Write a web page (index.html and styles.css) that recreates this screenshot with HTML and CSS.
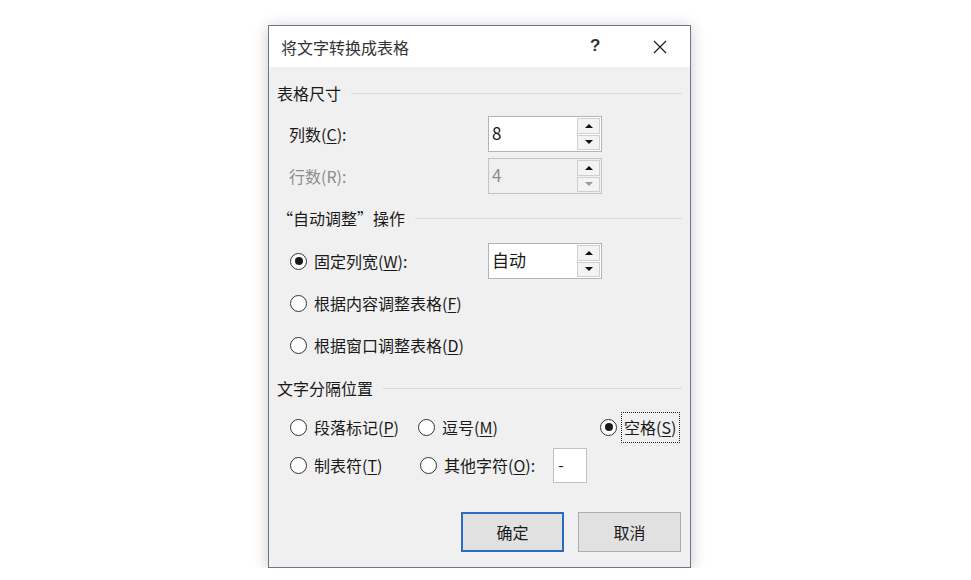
FILE: index.html
```html
<!DOCTYPE html>
<html lang="zh-CN">
<head>
    <meta charset="UTF-8">
    <title>将文字转换成表格</title>
    <link rel="stylesheet" href="styles.css">
</head>
<body>

<div class="dialog">
    <div class="titlebar">
        <span class="title">将文字转换成表格</span>
        <span class="help">?</span>
        <span class="close">
            <svg width="16" height="16" viewBox="0 0 16 16"><path d="M2 2 L14 14 M14 2 L2 14" stroke="#222" stroke-width="1.3" fill="none"/></svg>
        </span>
    </div>

    <div class="content">
        <div class="group-head head-size"><span>表格尺寸</span></div>

        <div class="row row-cols">
            <label class="label">列数(<u>C</u>):</label>
            <div class="spin">
                <span class="spin-value">8</span>
                <div class="spin-btns"><span class="btn-up"></span><span class="btn-down"></span></div>
            </div>
        </div>

        <div class="row row-rows disabled">
            <label class="label">行数(R):</label>
            <div class="spin">
                <span class="spin-value">4</span>
                <div class="spin-btns"><span class="btn-up"></span><span class="btn-down"></span></div>
            </div>
        </div>

        <div class="group-head head-auto"><span>“自动调整”操作</span></div>

        <div class="row row-fixed">
            <div class="label radio-opt"><span class="radio checked"></span>固定列宽(<u>W</u>):</div>
            <div class="spin">
                <span class="spin-value">自动</span>
                <div class="spin-btns"><span class="btn-up"></span><span class="btn-down"></span></div>
            </div>
        </div>

        <div class="row row-content">
            <div class="radio-opt"><span class="radio"></span>根据内容调整表格(<u>F</u>)</div>
        </div>

        <div class="row row-window">
            <div class="radio-opt"><span class="radio"></span>根据窗口调整表格(<u>D</u>)</div>
        </div>

        <div class="group-head head-sep"><span>文字分隔位置</span></div>

        <div class="sep-grid">
            <div class="radio-opt"><span class="radio"></span>段落标记(<u>P</u>)</div>
            <div class="radio-opt"><span class="radio"></span>逗号(<u>M</u>)</div>
            <div class="radio-opt"><span class="radio checked"></span><span class="focus">空格(<u>S</u>)</span></div>
            <div class="radio-opt"><span class="radio"></span>制表符(<u>T</u>)</div>
            <div class="radio-opt other"><span class="radio"></span>其他字符(<u>O</u>):<span class="char-box">-</span></div>
        </div>

        <div class="buttons">
            <button class="btn default">确定</button>
            <button class="btn">取消</button>
        </div>
    </div>
</div>

</body>
</html>
```

FILE: styles.css
```css
body {
    margin: 0;
    background: #fff;
    font-family: "Noto Sans CJK SC", "Noto Sans", sans-serif;
    font-size: 16px;
    color: #1a1a1a;
}

.dialog {
    width: 421px;
    margin: 25px 0 0 268px;
    border: 1px solid #66788c;
    background: #f0f0f0;
    box-shadow: 0 2px 14px rgba(0, 0, 0, 0.22);
}

.titlebar {
    height: 41px;
    background: #fff;
    display: flex;
    align-items: center;
    padding-left: 12px;
}
.title {
    flex: 1;
    color: #333;
}
.help {
    font-family: "Liberation Sans", sans-serif;
    font-weight: bold;
    font-size: 17px;
    color: #333;
    width: 62px;
    margin-top: -2px;
}
.close {
    width: 38px;
    display: flex;
    align-items: center;
}

.content {
    padding: 14px 8px 15px 8px;
}

.group-head {
    height: 24px;
    display: flex;
    align-items: center;
}
.group-head::after {
    content: "";
    flex: 1;
    height: 1px;
    background: #dadada;
    margin-left: 10px;
}
.head-auto { margin-top: 12px; }
.head-sep { margin-top: 19px; }

.row {
    display: flex;
    align-items: center;
    padding-left: 12px;
}
.row-cols { height: 36px; margin-top: 11px; }
.row-rows { height: 36px; margin-top: 6px; }
.row-fixed { height: 36px; margin-top: 13px; padding-left: 13px; }
.row-content { height: 24px; margin-top: 12px; padding-left: 13px; }
.row-window { height: 24px; margin-top: 18px; padding-left: 13px; }

.label {
    width: 199px;
}
.row-fixed .label { width: 198px; }

.disabled .label { color: #8d8d8d; }

u { text-underline-offset: 2px; }

.spin {
    width: 112px;
    height: 34px;
    border: 1px solid #b4b4b4;
    background: #fff;
    display: flex;
}
.spin-value {
    flex: 1;
    padding: 3px 0 0 3px;
    font-size: 17px;
}
.disabled .spin { background: #f0f0f0; border-color: #c4c4c4; }
.disabled .spin-value { color: #8d8d8d; }

.spin-btns {
    width: 23px;
    display: flex;
    flex-direction: column;
    padding: 1px 1px 1px 0;
}
.spin-btns span {
    flex: 1;
    border: 1px solid #cfcfcf;
    background: #f3f3f3;
    display: flex;
    align-items: center;
    justify-content: center;
}
.spin-btns span + span { margin-top: 1px; }
.btn-up::before {
    content: "";
    border-left: 4px solid transparent;
    border-right: 4px solid transparent;
    border-bottom: 4px solid #111;
}
.btn-down::before {
    content: "";
    border-left: 4px solid transparent;
    border-right: 4px solid transparent;
    border-top: 4px solid #111;
}
.disabled .btn-down::before { border-top-color: #9a9a9a; }

.radio-opt {
    display: flex;
    align-items: center;
    white-space: nowrap;
}
.radio {
    width: 15px;
    height: 15px;
    border: 1px solid #333;
    border-radius: 50%;
    background: #fff;
    margin-right: 7px;
    display: flex;
    align-items: center;
    justify-content: center;
    flex-shrink: 0;
}
.radio.checked::after {
    content: "";
    width: 8px;
    height: 8px;
    border-radius: 50%;
    background: #1a1a1a;
}

.sep-grid {
    display: grid;
    grid-template-columns: 128px 182px auto;
    grid-template-rows: 28px 36px;
    row-gap: 6px;
    margin-top: 13px;
    padding-left: 13px;
}
.sep-grid .radio-opt:nth-child(3) .radio { margin-right: 4px; }
.sep-grid .other { margin-left: 2px; }
.focus {
    border: 1px dotted #222;
    padding: 2px 3px 3px 2px;
}
.char-box {
    width: 28px;
    height: 33px;
    margin-left: 18px;
    border: 1px solid #c2c2c2;
    background: #fff;
    padding-left: 4px;
    line-height: 30px;
}

.buttons {
    display: flex;
    justify-content: flex-end;
    gap: 14px;
    margin-top: 29px;
    padding-right: 1px;
}
.btn {
    width: 103px;
    height: 40px;
    font-family: inherit;
    font-size: 16px;
    color: #1a1a1a;
    background: #e1e1e1;
    border: 1px solid #adadad;
}
.btn.default {
    border: 2px solid #2a6cbd;
}
```
